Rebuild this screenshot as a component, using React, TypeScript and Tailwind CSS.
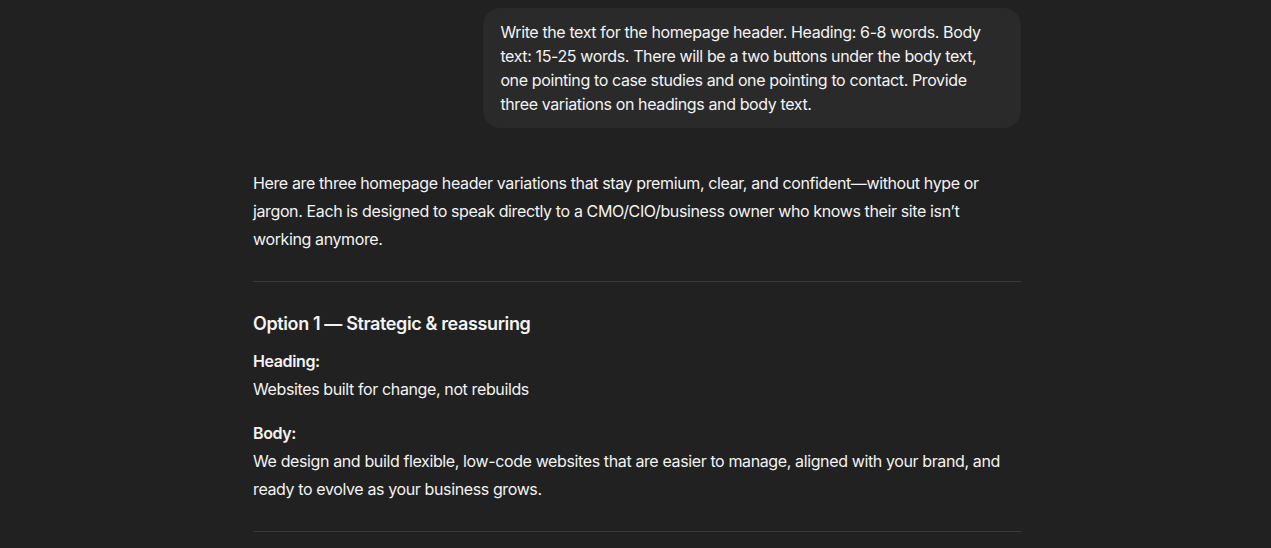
export default function App() {
  return (
    <div className="min-h-screen w-full bg-[#212121] pl-[3px] text-[#f3f3f3] font-['Inter',_'Noto_Sans',_sans-serif] antialiased">
      <div className="mx-auto w-[768px] pt-2 tracking-[-0.38px]">
        <div className="flex justify-end">
          <div className="max-w-[70%] rounded-[18px] bg-[#2a2a2a] py-3 pl-[17px] pr-4 text-[16px] leading-6">
            Write the text for the homepage header. Heading: 6-8 words. Body text: 15-25 words. There will be a two buttons under the body text, one pointing to case studies and one pointing to contact. Provide three variations on headings and body text.
          </div>
        </div>

        <div className="mt-[41px] text-[16px] leading-7">
          <p>
            Here are three homepage header variations that stay premium, clear, and confident—without hype or jargon. Each is designed to speak directly to a CMO/CIO/business owner who knows their site isn’t working anymore.
          </p>

          <hr className="my-7 border-t border-[#3a3a3a]" />

          <h3 className="text-[18px] font-semibold leading-7">Option 1 — Strategic &amp; reassuring</h3>
          <p className="mt-[9px] font-semibold">Heading:</p>
          <p>Websites built for change, not rebuilds</p>
          <p className="mt-4 font-semibold">Body:</p>
          <p>
            We design and build flexible, low-code websites that are easier to manage, aligned with your brand, and ready to evolve as your business grows.
          </p>

          <hr className="my-7 border-t border-[#3a3a3a]" />
        </div>
      </div>
    </div>
  );
}
